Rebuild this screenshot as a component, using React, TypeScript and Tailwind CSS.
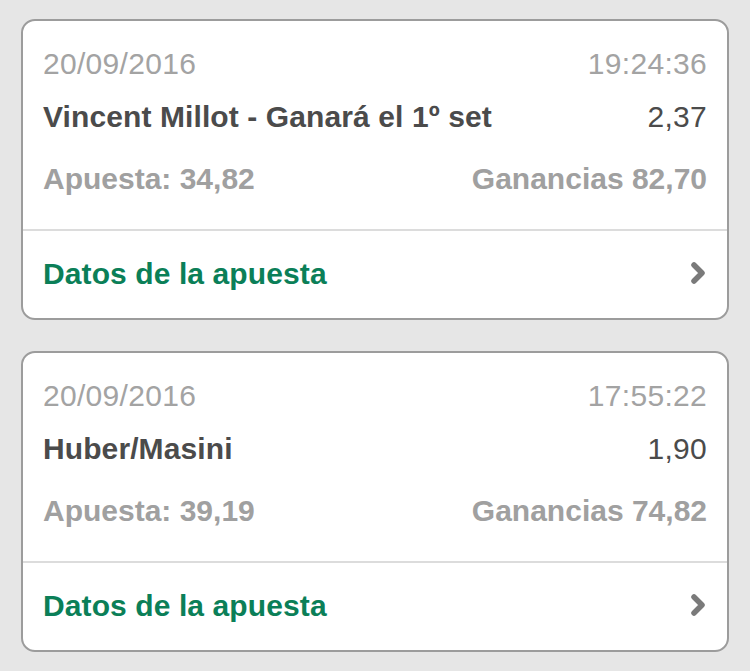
const bets = [
	{
		date: "20/09/2016",
		time: "19:24:36",
		title: "Vincent Millot - Ganará el 1º set",
		odds: "2,37",
		stake: "34,82",
		win: "82,70",
	},
	{
		date: "20/09/2016",
		time: "17:55:22",
		title: "Huber/Masini",
		odds: "1,90",
		stake: "39,19",
		win: "74,82",
	},
];

function Chevron() {
	return (
		<svg width="18" height="26" viewBox="0 0 18 26" className="text-[#7a7a7a]">
			<path d="M5 5 L13 13 L5 21" fill="none" stroke="currentColor" strokeWidth="5.5" strokeLinecap="round" strokeLinejoin="round" />
		</svg>
	);
}

function BetCard({ bet }: { bet: (typeof bets)[number] }) {
	return (
		<div className="rounded-[14px] border-2 border-[#9c9c9c] bg-white">
			<div className="px-[20px] pt-[24px] pb-[33px]">
				<div className="flex h-[36px] items-center justify-between text-[30px] tracking-[0.3px] text-[#a3a3a3]">
					<span>{bet.date}</span>
					<span>{bet.time}</span>
				</div>
				<div className="mt-[17px] flex h-[36px] items-center justify-between text-[30px] text-[#4b4b4b]">
					<span className="font-bold tracking-[0.1px]">{bet.title}</span>
					<span className="tracking-[0.3px]">{bet.odds}</span>
				</div>
				<div className="mt-[26px] flex h-[36px] items-center justify-between text-[30px] tracking-[0px] font-bold text-[#a0a0a0]">
					<span>Apuesta: {bet.stake}</span>
					<span>Ganancias {bet.win}</span>
				</div>
			</div>
			<div className="flex h-[89px] items-center justify-between border-t-2 border-[#dcdcdc] pb-[3px] pl-[20px] pr-[20px]">
				<span className="text-[30px] tracking-[0.1px] font-bold text-[#0b7f58]">Datos de la apuesta</span>
				<Chevron />
			</div>
		</div>
	);
}

export default function App() {
	return (
		<div
			className="flex min-h-[671px] flex-col gap-[31px] bg-[#e6e6e6] px-[21px] pt-[19px]"
			style={{ fontFamily: '"Liberation Sans", Arial, sans-serif' }}
		>
			{bets.map((bet) => (
				<BetCard key={bet.time} bet={bet} />
			))}
		</div>
	);
}
